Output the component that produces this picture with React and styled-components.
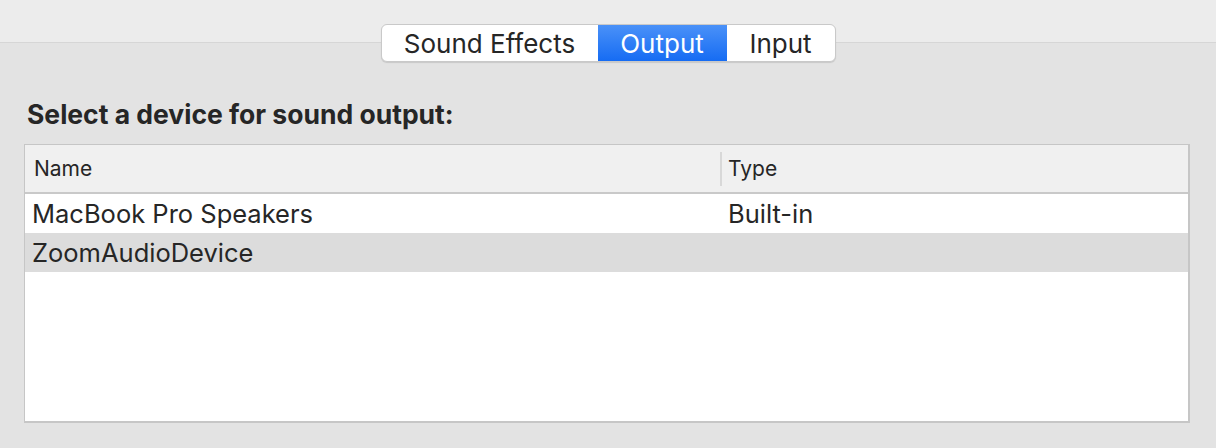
import React from 'react'
import styled, { createGlobalStyle } from 'styled-components'

const GlobalStyle = createGlobalStyle`
  html, body {
    margin: 0;
    padding: 0;
  }
  body {
    font-family: Inter, "Liberation Sans", Arial, sans-serif;
    color: #262626;
    -webkit-font-smoothing: antialiased;
  }
`

const Pane = styled.div`
  width: 1216px;
  height: 448px;
  box-sizing: border-box;
  padding-top: 24px;
  display: flex;
  flex-direction: column;
  background: linear-gradient(
    to bottom,
    #ececec 0px,
    #ececec 42px,
    #d6d6d6 42px,
    #d6d6d6 43px,
    #e3e3e3 43px
  );
`

const Segmented = styled.div`
  align-self: center;
  display: flex;
  height: 38px;
  box-sizing: border-box;
  background: #fff;
  border: 1px solid #c9c9c9;
  border-radius: 6px;
  box-shadow: 0 1px 1px rgba(0, 0, 0, 0.12);
  overflow: hidden;
`

const Segment = styled.div`
  display: flex;
  align-items: center;
  justify-content: center;
  width: ${props => props.width}px;
  font-size: 26px;
  color: ${props => (props.active ? '#fff' : '#262626')};
  background: ${props => (props.active ? 'linear-gradient(to bottom, #4a91f8, #166cf3)' : 'transparent')};
`

const Heading = styled.h2`
  margin: 36px 0 0 27px;
  font-size: 26.5px;
  font-weight: 700;
  line-height: 32px;
  color: #262626;
`

const Table = styled.div`
  margin: 14px 0 0 24px;
  width: 1166px;
  height: 279px;
  box-sizing: border-box;
  background: #fff;
  border: 1px solid #c6c6c6;
  border-right-width: 2px;
  border-bottom-width: 2px;
  display: flex;
  flex-direction: column;
`

const HeaderRow = styled.div`
  display: grid;
  grid-template-columns: 695px 1fr;
  height: 47px;
  background: #f0f0f0;
  border-bottom: 2px solid #c9c9c9;
  font-size: 21px;
`

const HeaderCell = styled.div`
  display: flex;
  align-items: center;
  padding-left: ${props => (props.divided ? '8px' : '9px')};
  position: relative;
  ${props => props.divided && `
    &::before {
      content: '';
      position: absolute;
      left: 0;
      top: 7px;
      bottom: 6px;
      width: 2px;
      background: #d8d8d8;
    }
  `}
`

const Row = styled.div`
  display: grid;
  grid-template-columns: 695px 1fr;
  height: 39px;
  background: ${props => (props.selected ? '#dcdcdc' : '#fff')};
  font-size: 25.5px;
`

const Cell = styled.div`
  display: flex;
  align-items: center;
  padding-left: ${props => (props.second ? '8px' : '7px')};
`

const tabs = [
  { label: 'Sound Effects', width: 216 },
  { label: 'Output', width: 129, active: true },
  { label: 'Input', width: 108 },
]

const devices = [
  { name: 'MacBook Pro Speakers', type: 'Built-in' },
  { name: 'ZoomAudioDevice', type: '', selected: true },
]

const App = () => (
  <>
    <GlobalStyle />
    <Pane>
      <Segmented>
        {tabs.map(tab => (
          <Segment key={tab.label} width={tab.width} active={tab.active}>
            {tab.label}
          </Segment>
        ))}
      </Segmented>
      <Heading>Select a device for sound output:</Heading>
      <Table>
        <HeaderRow>
          <HeaderCell>Name</HeaderCell>
          <HeaderCell divided>Type</HeaderCell>
        </HeaderRow>
        {devices.map(d => (
          <Row key={d.name} selected={d.selected}>
            <Cell>{d.name}</Cell>
            <Cell second>{d.type}</Cell>
          </Row>
        ))}
      </Table>
    </Pane>
  </>
)

export default App
